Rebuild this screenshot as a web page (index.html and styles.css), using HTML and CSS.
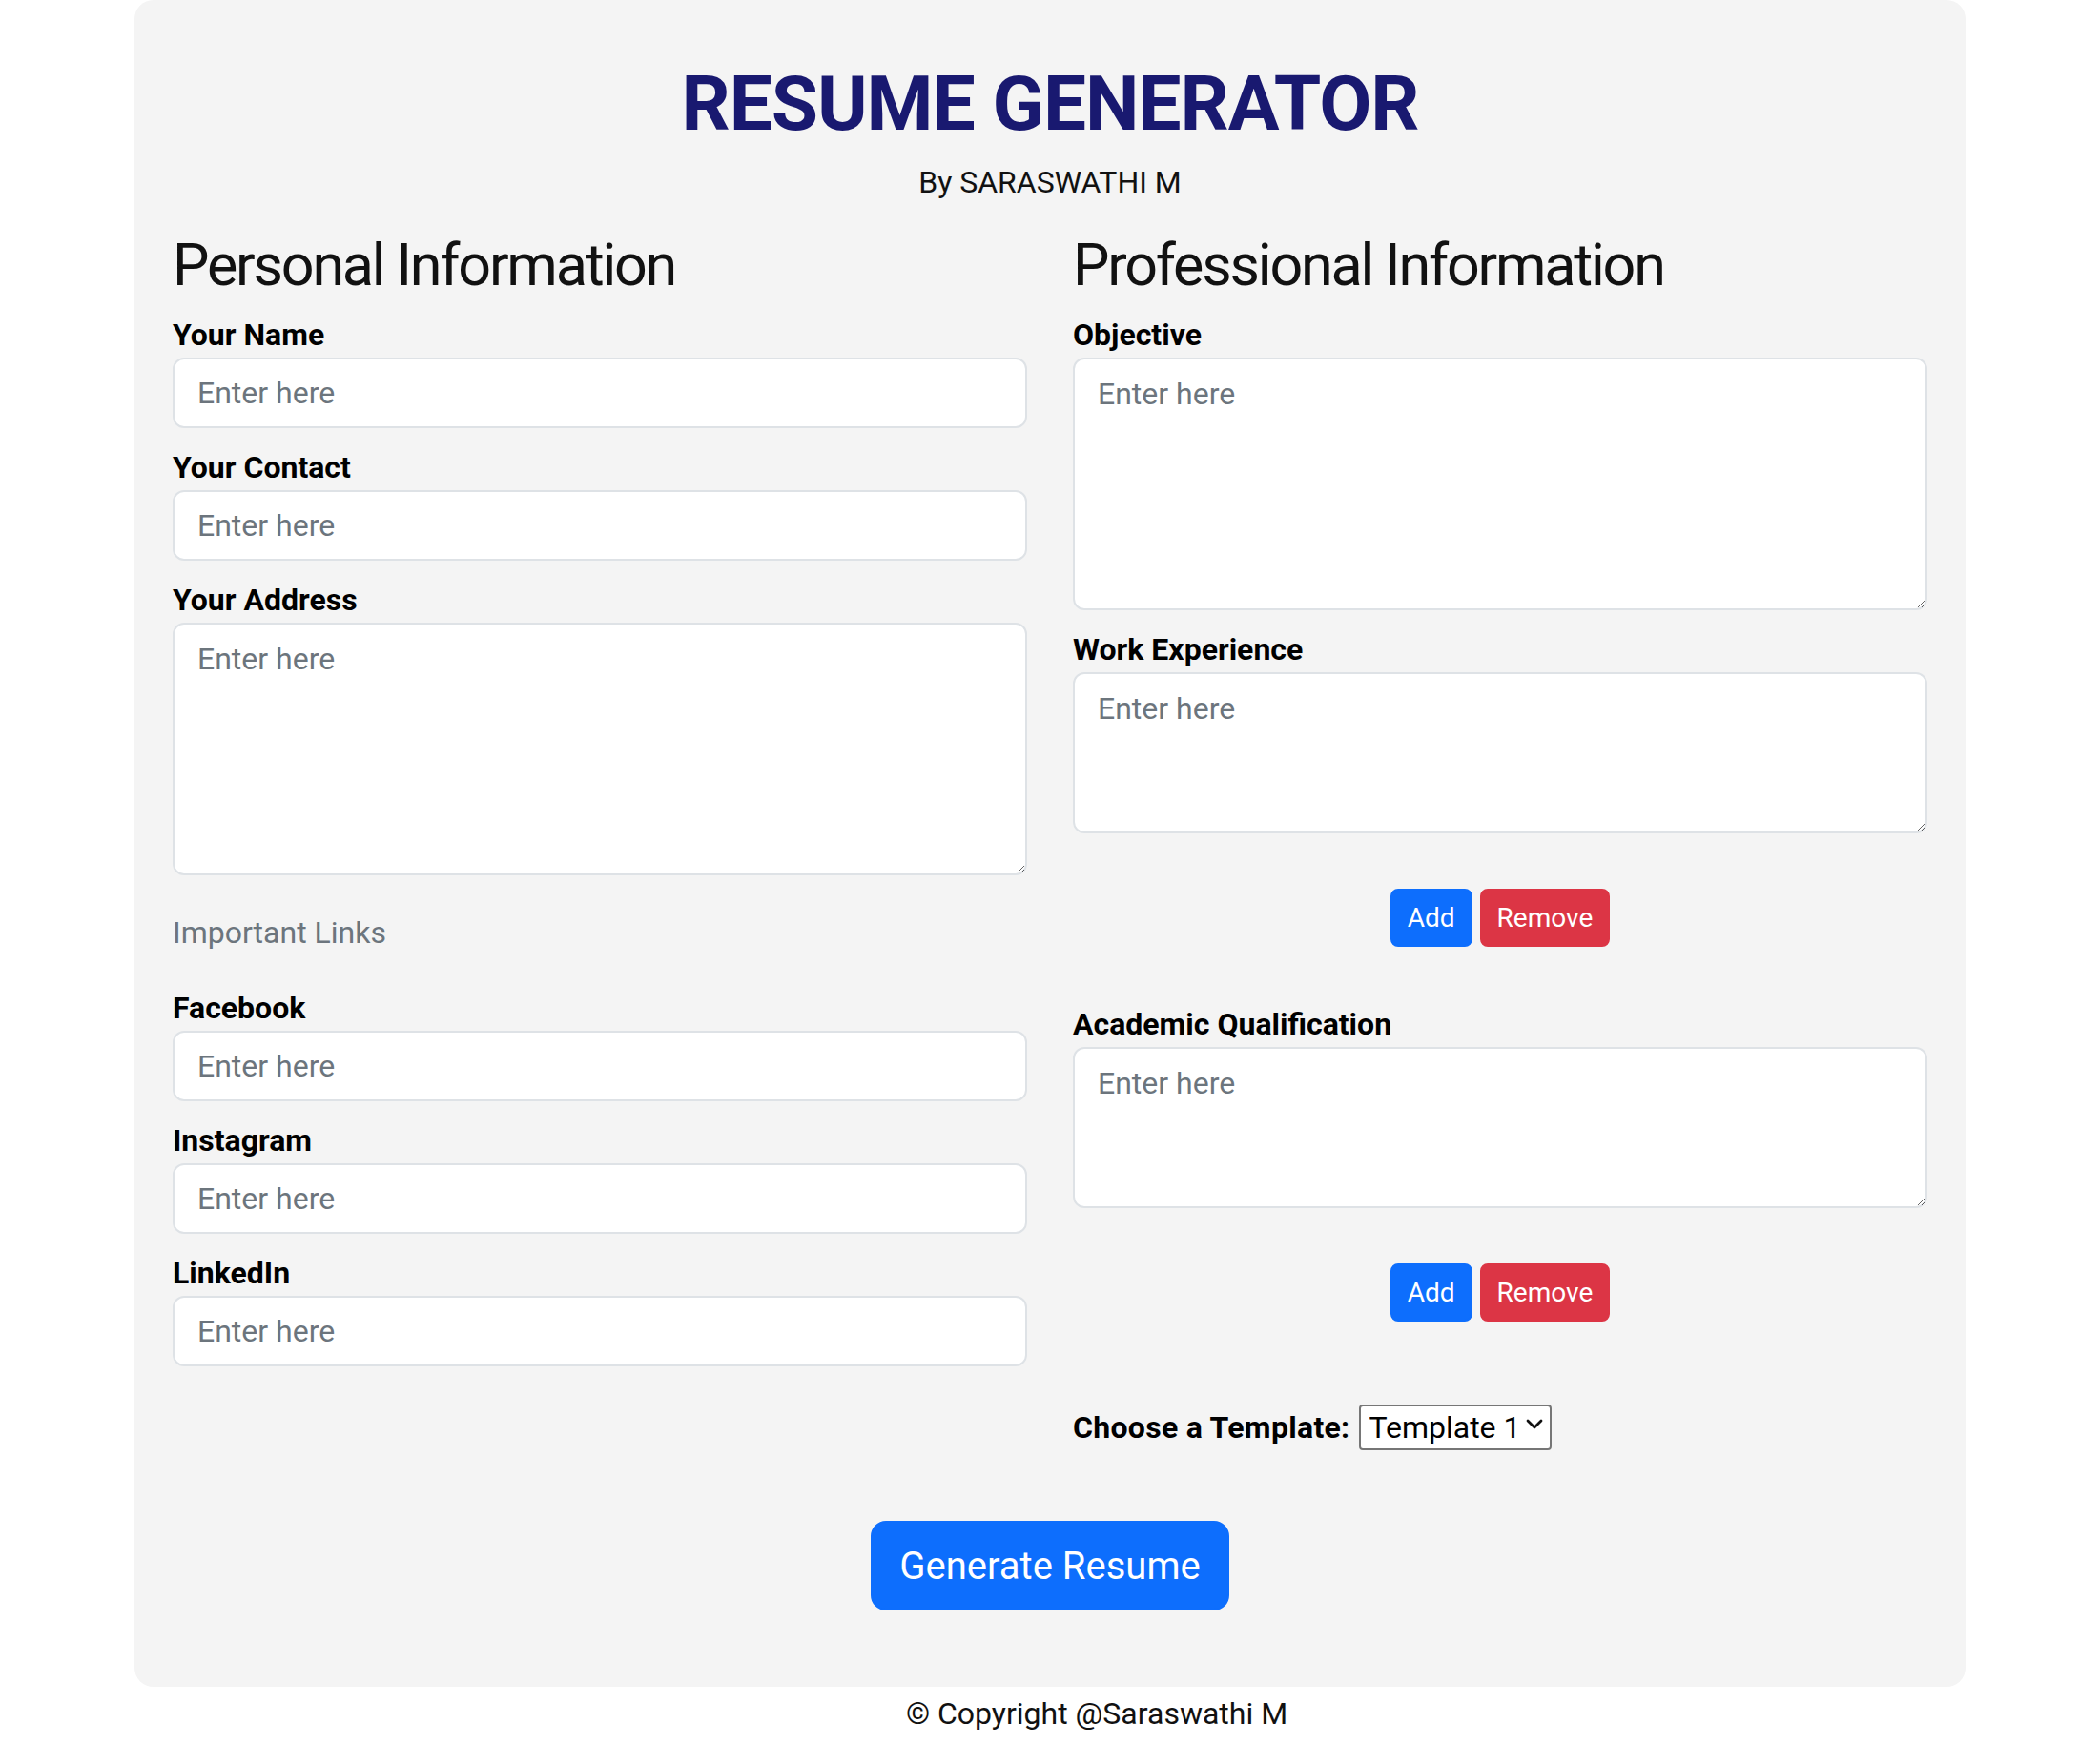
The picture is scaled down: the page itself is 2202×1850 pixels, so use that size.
FILE: index.html
```html
<!DOCTYPE html>
<html lang="en">
<head>
<meta charset="utf-8">
<title>Resume Generator</title>
<link rel="stylesheet" href="styles.css">
</head>
<body>
<main class="container">
  <header class="page-head">
    <h1 class="title">RESUME GENERATOR</h1>
    <p class="byline">By SARASWATHI M</p>
  </header>

  <form class="form-grid">
    <section class="col">
      <h2 class="section-title">Personal Information</h2>
      <div class="field">
        <label class="field-label" for="name">Your Name</label>
        <input class="control" id="name" type="text" placeholder="Enter here">
      </div>
      <div class="field">
        <label class="field-label" for="contact">Your Contact</label>
        <input class="control" id="contact" type="text" placeholder="Enter here">
      </div>
      <div class="field">
        <label class="field-label" for="address">Your Address</label>
        <textarea class="control area area-tall" id="address" placeholder="Enter here"></textarea>
      </div>
      <p class="muted-heading">Important Links</p>
      <div class="field">
        <label class="field-label" for="fb">Facebook</label>
        <input class="control" id="fb" type="text" placeholder="Enter here">
      </div>
      <div class="field">
        <label class="field-label" for="ig">Instagram</label>
        <input class="control" id="ig" type="text" placeholder="Enter here">
      </div>
      <div class="field">
        <label class="field-label" for="li">LinkedIn</label>
        <input class="control" id="li" type="text" placeholder="Enter here">
      </div>
    </section>

    <section class="col">
      <h2 class="section-title">Professional Information</h2>
      <div class="field">
        <label class="field-label" for="objective">Objective</label>
        <textarea class="control area area-tall" id="objective" placeholder="Enter here"></textarea>
      </div>
      <div class="field">
        <label class="field-label" for="work">Work Experience</label>
        <textarea class="control area area-short" id="work" placeholder="Enter here"></textarea>
      </div>
      <div class="btn-row">
        <button type="button" class="btn-sm btn-blue">Add</button>
        <button type="button" class="btn-sm btn-red">Remove</button>
      </div>
      <div class="field">
        <label class="field-label" for="academic">Academic Qualification</label>
        <textarea class="control area area-short" id="academic" placeholder="Enter here"></textarea>
      </div>
      <div class="btn-row">
        <button type="button" class="btn-sm btn-blue">Add</button>
        <button type="button" class="btn-sm btn-red">Remove</button>
      </div>
      <div class="template-row">
        <label class="template-label" for="template">Choose a Template:</label>
        <span class="select-wrap">
          <select class="select" id="template">
            <option>Template 1</option>
            <option>Template 2</option>
          </select>
          <svg class="chevron" viewBox="0 0 18 11" width="18" height="11" aria-hidden="true"><path d="M2 2 L9 9 L16 2" fill="none" stroke="#111" stroke-width="2.8" stroke-linecap="round" stroke-linejoin="round"/></svg>
        </span>
      </div>
    </section>
  </form>

  <div class="generate-wrap">
    <button type="button" class="btn-generate">Generate Resume</button>
  </div>
</main>
<footer class="footer">© Copyright @Saraswathi M</footer>
</body>
</html>
```
FILE: styles.css
```css
html, body {
  margin: 0;
  padding: 0;
  background: #ffffff;
}

body {
  font-family: Roboto, "Liberation Sans", sans-serif;
  font-size: 32px;
  line-height: 48px;
  color: #212529;
}

.container {
  box-sizing: border-box;
  width: 1920px;
  margin: 0 auto;
  padding: 40px 40px 80px;
  background: #f4f4f4;
  border-radius: 20px;
}

.page-head {
  text-align: center;
}

.title {
  margin: 21px 0 10px;
  font-size: 80px;
  line-height: 96px;
  font-weight: 700;
  letter-spacing: -1px;
  color: #191970;
}

.byline {
  margin: 0 0 25px;
  color: #111;
}

.form-grid {
  display: grid;
  grid-template-columns: 896px 896px;
  column-gap: 48px;
  align-items: start;
}

.col {
  display: flex;
  flex-direction: column;
}

.section-title {
  margin: 0 0 10px;
  font-size: 61px;
  line-height: 77px;
  font-weight: 400;
  letter-spacing: -2.2px;
  color: #111;
}

.field {
  display: flex;
  flex-direction: column;
  margin-bottom: 17px;
}

.field-label {
  font-weight: 700;
  color: #000;
  line-height: 48px;
}

.control {
  box-sizing: border-box;
  width: 100%;
  height: 74px;
  margin: 0;
  padding: 11px 24px;
  font-family: inherit;
  font-size: 32px;
  line-height: 48px;
  color: #212529;
  background: #ffffff;
  border: 2px solid #dee2e6;
  border-radius: 12px;
  outline: none;
}

.control::placeholder {
  color: #6c757d;
  opacity: 1;
}

.area {
  padding: 12px 24px;
  resize: vertical;
}

.area-tall {
  height: 265px;
}

.area-short {
  height: 169px;
}

.muted-heading {
  margin: 19px 0 31px;
  color: #6c757d;
}

.btn-row {
  display: flex;
  justify-content: center;
  gap: 8px;
  margin: 41px 0 57px;
}

.btn-sm {
  box-sizing: border-box;
  height: 61px;
  padding: 0 16px;
  font-family: inherit;
  font-size: 28px;
  line-height: 42px;
  color: #ffffff;
  border: 2px solid transparent;
  border-radius: 8px;
  cursor: pointer;
}

.btn-blue {
  background: #0d6efd;
  border-color: #0d6efd;
}

.btn-red {
  background: #dc3545;
  border-color: #dc3545;
}

.btn-row + .template-row {
  margin-top: 30px;
}

.template-row {
  display: flex;
  align-items: center;
  gap: 10px;
}

.template-label {
  font-weight: 700;
  color: #000;
  letter-spacing: 0.3px;
}

.select-wrap {
  position: relative;
  display: inline-flex;
}

.select {
  box-sizing: border-box;
  width: 202px;
  height: 48px;
  padding: 0 36px 0 8px;
  font-family: inherit;
  font-size: 32px;
  line-height: 44px;
  color: #000;
  background: #ffffff;
  border: 2px solid #767676;
  border-radius: 4px;
  appearance: none;
  -webkit-appearance: none;
}

.chevron {
  position: absolute;
  right: 9px;
  top: 15px;
  pointer-events: none;
}

.generate-wrap {
  display: flex;
  justify-content: center;
  margin-top: 74px;
}

.btn-generate {
  box-sizing: border-box;
  height: 94px;
  padding: 2px 28px 0;
  font-family: inherit;
  font-size: 40px;
  line-height: 60px;
  color: #ffffff;
  background: #0d6efd;
  border: 2px solid #0d6efd;
  border-radius: 16px;
  cursor: pointer;
}

.footer {
  padding: 4px 0 0 98px;
  text-align: center;
  color: #111;
}
```
